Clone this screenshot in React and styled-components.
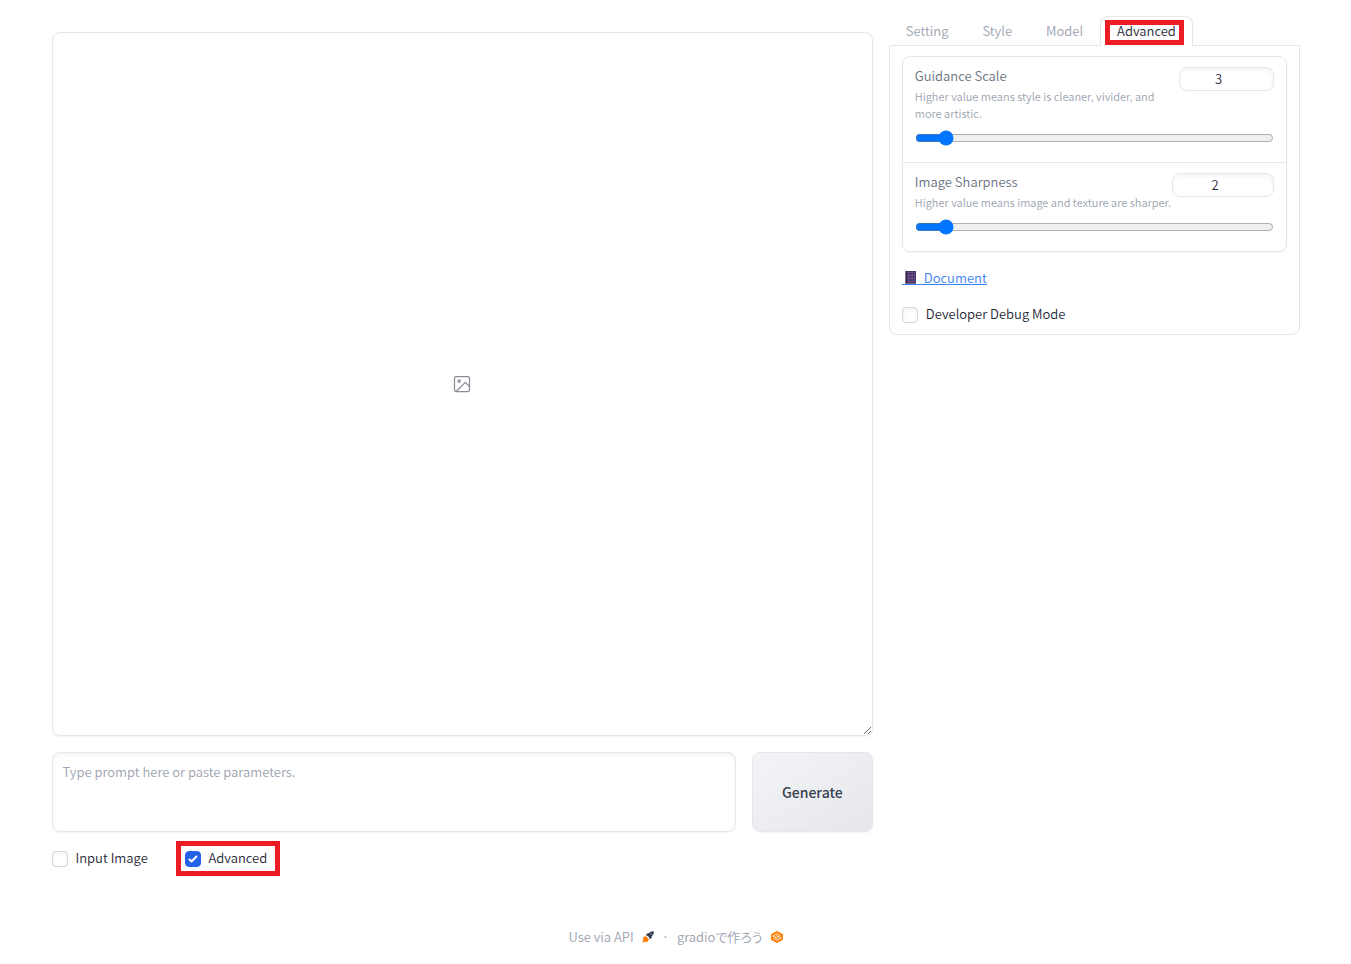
import React, { useState } from 'react';
import styled, { createGlobalStyle } from 'styled-components';

const App = () => {
  const [tab, setTab] = useState('Advanced');
  const [guidance, setGuidance] = useState(3);
  const [sharpness, setSharpness] = useState(2);

  return (
    <>
      <GlobalStyle />
      <StyledPage>
        <StyledColumns>
          <StyledMain>
            <StyledCanvas>
              <ImageIcon />
            </StyledCanvas>
            <StyledPromptRow>
              <StyledPrompt
                aria-label='Prompt'
                placeholder='Type prompt here or paste parameters.'
              />
              <StyledGenerate type='button'>Generate</StyledGenerate>
            </StyledPromptRow>
            <StyledOptions>
              <StyledCheck>
                <input type='checkbox' />
                Input Image
              </StyledCheck>
              <StyledMarkedCheck>
                <input type='checkbox' defaultChecked />
                Advanced
              </StyledMarkedCheck>
            </StyledOptions>
          </StyledMain>
          <StyledSide>
            <StyledTabs role='tablist'>
              {['Setting', 'Style', 'Model', 'Advanced'].map((name) => (
                <StyledTab
                  key={name}
                  type='button'
                  role='tab'
                  aria-selected={tab === name}
                  $active={tab === name}
                  onClick={() => setTab(name)}
                >
                  {name === 'Advanced' ? <StyledMark>{name}</StyledMark> : name}
                </StyledTab>
              ))}
            </StyledTabs>
            <StyledPanel role='tabpanel'>
              <StyledGroup>
                <SliderField
                  id='guidance'
                  label='Guidance Scale'
                  info='Higher value means style is cleaner, vivider, and more artistic.'
                  fieldWidth={95}
                  min={1}
                  max={30}
                  value={guidance}
                  onChange={setGuidance}
                />
                <SliderField
                  id='sharpness'
                  label='Image Sharpness'
                  info='Higher value means image and texture are sharper.'
                  fieldWidth={102}
                  min={0}
                  max={30}
                  value={sharpness}
                  onChange={setSharpness}
                />
              </StyledGroup>
              <StyledLinkRow>
                <a href='#document'>
                  <BookIcon />
                  Document
                </a>
              </StyledLinkRow>
              <StyledCheck>
                <input type='checkbox' />
                Developer Debug Mode
              </StyledCheck>
            </StyledPanel>
          </StyledSide>
        </StyledColumns>
        <StyledFooter>
          <a href='#api'>
            Use via API
            <RocketIcon />
          </a>
          <span>·</span>
          <a href='#gradio'>
            <span>gradioで作ろう</span>
            <GradioIcon />
          </a>
        </StyledFooter>
      </StyledPage>
    </>
  );
};

const SliderField = ({
  id,
  label,
  info,
  fieldWidth,
  min,
  max,
  value,
  onChange,
}) => (
  <StyledSlider>
    <StyledSliderHead>
      <label htmlFor={id}>
        {label}
        <StyledInfo>{info}</StyledInfo>
      </label>
      <StyledNumber
        id={id}
        type='number'
        $width={fieldWidth}
        min={min}
        max={max}
        value={value}
        onChange={(e) => onChange(e.target.value)}
      />
    </StyledSliderHead>
    <StyledRange
      type='range'
      aria-label={label}
      min={min}
      max={max}
      value={value}
      onChange={(e) => onChange(e.target.value)}
    />
  </StyledSlider>
);

// Icons
const ImageIcon = () => (
  <svg
    width='20'
    height='20'
    viewBox='0 0 24 24'
    fill='none'
    stroke='#888c95'
    strokeWidth='1.5'
    strokeLinecap='round'
    strokeLinejoin='round'
  >
    <rect x='3' y='3' width='18' height='18' rx='2' ry='2' />
    <circle cx='8.5' cy='8.5' r='1.5' />
    <polyline points='21 15 16 10 5 21' />
  </svg>
);

const BookIcon = () => (
  <svg width='13' height='14' viewBox='0 0 13 14'>
    <path d='M1 0h11v13H1z' fill='#4a3566' />
    <path d='M1 0h1v13H1z' fill='#8a7590' />
    <path d='M2 0h1v13H2z' fill='#3a2350' />
    <path
      d='M4 1.500h7M4 4.500h7M4 7.500h7M4 10.500h7'
      stroke='#96508c'
      strokeWidth='1'
      strokeDasharray='2 1'
    />
    <path
      d='M4 3h7M4 6h7M4 9h7'
      stroke='#3f5a9a'
      strokeWidth='1'
      strokeDasharray='1 1'
    />
    <path d='M1 12h11v1H1z' fill='#7b6580' />
  </svg>
);

const RocketIcon = () => (
  <svg width='12' height='12' viewBox='0 0 12 12'>
    <path
      d='M11.8.2C9.4.1 7.9.9 6.8 2.3L5 2.500 3.900 4.400l1.600.4 1.800 1.800.4 1.600 1.900-1.100.1-1.900C11.100 4.100 11.900 2.600 11.800.2z'
      fill='#2f3b4f'
    />
    <circle cx='8.900' cy='3.100' r='.8' fill='#8b95a3' />
    <path
      d='M3.200 5.300 1.500 6.200.5 8.400l1 .1L.2 11.800l3.300-1.300.1 1 2.200-1 .9-1.700-.4-1.300-1.800-1.800z'
      fill='#ff7c00'
    />
  </svg>
);

const GradioIcon = () => (
  <svg width='12' height='12' viewBox='0 0 12 12'>
    <path d='M6 0l6 3.200v5.600L6 12 0 8.800V3.200z' fill='#ff7c00' />
    <path
      d='M9.800 4.800 6 2.700 1.600 5 6 7.300l1.600-.8M2.200 7.200 6 9.300l4.400-2.300L6 4.700l-1.600.8'
      stroke='#fff'
      strokeWidth='.8'
      fill='none'
    />
  </svg>
);

const GlobalStyle = createGlobalStyle`
  * {
    box-sizing: border-box;
  }
  body {
    margin: 0;
    background: #fff;
    color: #1f2937;
    font-family: 'Noto Sans CJK JP', 'Noto Sans', sans-serif;
    font-size: 13px;
    font-weight: 350;
    line-height: 20px;
  }
  button,
  input,
  textarea {
    font: inherit;
    color: inherit;
  }
`;

const StyledPage = styled.div`
  max-width: 1280px;
  margin: 0 auto;
  padding: 16px;
`;

const StyledColumns = styled.div`
  display: flex;
  align-items: flex-start;
  gap: 16px;
`;

const StyledMain = styled.main`
  flex: 2 1 0;
  min-width: 0;
  display: flex;
  flex-direction: column;
  gap: 16px;
  padding-top: 16px;
`;

const StyledSide = styled.aside`
  flex: 1 1 0;
  min-width: 0;
`;

const StyledCanvas = styled.div`
  display: flex;
  align-items: center;
  justify-content: center;
  height: 704px;
  border: 1px solid #e5e7eb;
  border-radius: 8px;
  box-shadow: 0 1px 2px rgba(0, 0, 0, 0.05);
  resize: vertical;
  overflow: hidden;
`;

const StyledPromptRow = styled.div`
  display: flex;
  gap: 16px;
  height: 80px;
`;

const StyledPrompt = styled.textarea`
  flex: 1;
  min-width: 0;
  padding: 9px 10px;
  border: 1px solid #e5e7eb;
  border-radius: 8px;
  box-shadow: inset 0 2px 4px rgba(0, 0, 0, 0.05),
    0 1px 2px rgba(0, 0, 0, 0.05);
  resize: none;
  &::placeholder {
    color: #9ca3af;
  }
`;

const StyledGenerate = styled.button`
  flex: 0 0 121px;
  padding: 0;
  border: 1px solid #e5e7eb;
  border-radius: 8px;
  background: linear-gradient(to bottom right, #f3f4f6, #e5e7eb);
  box-shadow: 0 1px 2px rgba(0, 0, 0, 0.05);
  color: #374151;
  font-size: 14px;
  font-weight: 500;
`;

const StyledOptions = styled.div`
  display: flex;
  gap: 16px;
`;

const StyledCheck = styled.label`
  display: flex;
  align-items: center;
  gap: 8px;
  min-width: 117px;
  line-height: 20px;
  input {
    appearance: none;
    width: 16px;
    height: 16px;
    margin: 2px 0 0;
    border: 1px solid #d1d5db;
    border-radius: 4px;
    box-shadow: inset 0 2px 4px rgba(0, 0, 0, 0.05);
  }
  input:checked {
    border-color: #2563eb;
    background: #2563eb
      url("data:image/svg+xml,%3Csvg viewBox='0 0 16 16' fill='white' xmlns='http://www.w3.org/2000/svg'%3E%3Cpath d='M12.207 4.793a1 1 0 010 1.414l-5 5a1 1 0 01-1.414 0l-2-2a1 1 0 011.414-1.414L6.5 9.086l4.293-4.293a1 1 0 011.414 0z'/%3E%3C/svg%3E")
      center / 16px no-repeat;
  }
`;

// Red frames around the highlighted controls
const StyledMarkedCheck = styled(StyledCheck)`
  position: relative;
  min-width: 0;
  &::after {
    content: '';
    position: absolute;
    inset: -7px -13px -8px -9px;
    border: 5px solid #ed1c24;
    pointer-events: none;
  }
`;

const StyledMark = styled.span`
  position: relative;
  &::after {
    content: '';
    position: absolute;
    inset: -1px -8px -5px -12px;
    border: 5px solid #ed1c24;
    pointer-events: none;
  }
`;

const StyledTabs = styled.div`
  display: flex;
  position: relative;
  margin-bottom: -1px;
`;

const StyledTab = styled.button`
  height: 30px;
  padding: 0 16px 2px;
  border: 1px solid ${({ $active }) => ($active ? '#e5e7eb' : 'transparent')};
  border-bottom: 0;
  border-radius: 8px 8px 0 0;
  background: ${({ $active }) => ($active ? '#fff' : 'transparent')};
  color: ${({ $active }) => ($active ? '#1f2937' : '#9ca3af')};
`;

const StyledPanel = styled.div`
  display: flex;
  flex-direction: column;
  gap: 16px;
  padding: 10px 12px;
  border: 1px solid #e5e7eb;
  border-radius: 0 0 8px 8px;
`;

const StyledGroup = styled.div`
  border: 1px solid #e5e7eb;
  border-radius: 8px;
  box-shadow: 0 1px 2px rgba(0, 0, 0, 0.05);
`;

const StyledSlider = styled.div`
  padding: 10px 12px 16px;
  & + & {
    border-top: 1px solid #e5e7eb;
  }
`;

const StyledSliderHead = styled.div`
  display: flex;
  justify-content: space-between;
  align-items: flex-start;
  color: #6b7280;
  line-height: 18px;
`;

const StyledInfo = styled.span`
  display: block;
  margin-top: 3px;
  color: #9ca3af;
  font-size: 11px;
  line-height: 17px;
`;

const StyledNumber = styled.input`
  flex: none;
  width: ${({ $width }) => $width}px;
  height: 24px;
  padding: 0 8px 2px;
  border: 1px solid #e5e7eb;
  border-radius: 8px;
  box-shadow: inset 0 2px 4px rgba(0, 0, 0, 0.05);
  color: #1f2937;
  text-align: center;
`;

const StyledRange = styled.input`
  display: block;
  width: 100%;
  height: 16px;
  margin: 8px 0 0;
`;

const StyledLinkRow = styled.div`
  display: flex;
  height: 20px;
  align-items: center;
  a {
    display: flex;
    align-items: center;
    gap: 7px;
    height: 14px;
    padding-left: 2px;
    border-bottom: 1px solid #3b82f6;
    color: #3b82f6;
    text-decoration: none;
  }
`;

const StyledFooter = styled.footer`
  display: flex;
  justify-content: center;
  align-items: center;
  gap: 8px;
  margin-top: 59px;
  color: #9ca3af;
  font-feature-settings: 'palt';
  a {
    display: flex;
    align-items: center;
    gap: 8px;
    color: inherit;
    text-decoration: none;
  }
`;

export default App;
